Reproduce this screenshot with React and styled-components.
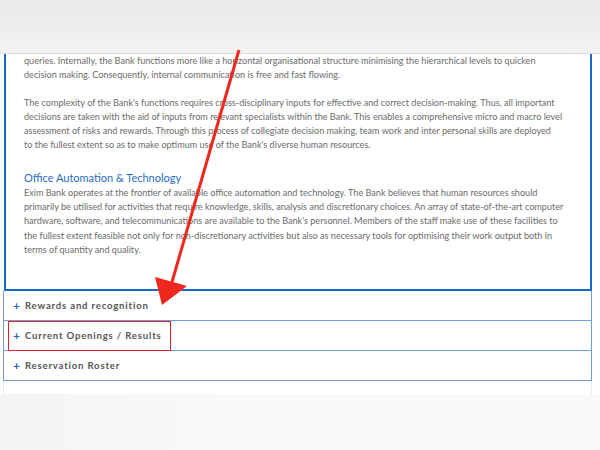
import styled, { createGlobalStyle } from 'styled-components'

const GlobalStyle = createGlobalStyle`
	html, body {
		margin: 0;
		padding: 0;
		background: #fff;
	}
	body {
		font-family: Lato, "Open Sans", Arial, sans-serif;
	}
`

const items = ['Rewards and recognition', 'Current Openings / Results', 'Reservation Roster']

const App = () => {
	return (
		<Page>
			<GlobalStyle />
			<TopBar />
			<Frame>
				<Panel>
					<Text>
						queries. Internally, the Bank functions more like a horizontal organisational structure minimising the hierarchical levels to quicken<br />
						decision making. Consequently, internal communication is free and fast flowing.
					</Text>
					<Text>
						The complexity of the Bank's functions requires cross-disciplinary inputs for effective and correct decision-making. Thus, all important<br />
						decisions are taken with the aid of inputs from relevant specialists within the Bank. This enables a comprehensive micro and macro level<br />
						assessment of risks and rewards. Through this process of collegiate decision making, team work and inter personal skills are deployed<br />
						to the fullest extent so as to make optimum use of the Bank's diverse human resources.
					</Text>
					<Heading>Office Automation &amp; Technology</Heading>
					<Text>
						Exim Bank operates at the frontier of available office automation and technology. The Bank believes that human resources should<br />
						primarily be utilised for activities that require knowledge, skills, analysis and discretionary choices. An array of state-of-the-art computer<br />
						hardware, software, and telecommunications are available to the Bank's personnel. Members of the staff make use of these facilities to<br />
						the fullest extent feasible not only for non-discretionary activities but also as necessary tools for optimising their work output both in<br />
						terms of quantity and quality.
					</Text>
				</Panel>
				{items.map((label) => (
					<Row key={label}>
						<Plus>+</Plus>
						<Label>{label}</Label>
					</Row>
				))}
				<Gap />
			</Frame>
			<Footer />
			<Highlight />
			<Arrow width="600" height="450" viewBox="0 0 600 450">
				<line x1="239" y1="50" x2="172" y2="282" stroke="#f0271c" strokeWidth="3" />
				<polygon points="155,277 187,286 162,305" fill="#f0271c" />
			</Arrow>
		</Page>
	)
}

const Page = styled.div`
	position: relative;
	width: 600px;
	height: 450px;
	overflow: hidden;
	background: #fff;
`

const TopBar = styled.div`
	height: 53px;
	background: linear-gradient(#e9e9e9, #efefef 70%, #f3f3f3);
	border-bottom: 1px solid #dcdcdc;
`

const Frame = styled.div`
	margin: 0 8px 0 3px;
	display: flex;
	flex-direction: column;
`

const Panel = styled.div`
	margin: 0 0 0 1px;
	border-left: 2px solid #1769c9;
	border-right: 2px solid #1769c9;
	border-bottom: 2px solid #1769c9;
	padding: 0 0 32px 18px;
	display: flow-root;
`

const Text = styled.p`
	margin: 0 0 13px;
	white-space: nowrap;
	font-size: 9.1px;
	line-height: 14.3px;
	color: #6b6b6b;
	&:last-child {
		margin-bottom: 0;
	}
`

const Heading = styled.h3`
	margin: 17px 0 0;
	font-size: 11px;
	font-weight: 400;
	line-height: 16px;
	color: #1f6cc2;
`

const Row = styled.div`
	height: 29px;
	display: flex;
	align-items: center;
	gap: 5px;
	padding-left: 9px;
	border: 1px solid #6e9fdc;
	border-top: none;
	background: #fff;
`

const Plus = styled.span`
	color: #2a6ab8;
	font-size: 12px;
	font-weight: 700;
	line-height: 1;
`

const Label = styled.span`
	font-size: 9.6px;
	font-weight: 700;
	letter-spacing: 0.8px;
	color: #555;
`

const Gap = styled.div`
	height: 13px;
	border-left: 1px solid #eaeaea;
	border-right: 1px solid #eaeaea;
`

const Footer = styled.div`
	height: 60px;
	background: linear-gradient(90deg, #f3f4f6, #f7f9fb 40%, #f7f9fb);
`

const Highlight = styled.div`
	position: absolute;
	left: 8px;
	top: 321px;
	width: 161px;
	height: 28px;
	border: 1.5px solid #e3212b;
`

const Arrow = styled.svg`
	position: absolute;
	left: 0;
	top: 0;
	pointer-events: none;
`

export default App
